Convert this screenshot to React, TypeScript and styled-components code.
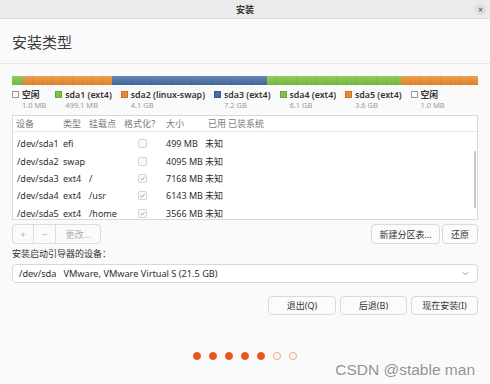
import styled, {createGlobalStyle} from "styled-components";

const GlobalStyle = createGlobalStyle`
  html, body {
    margin: 0;
    padding: 0;
    background: #fafafa;
  }
  body {
    font-family: "Noto Sans", "Noto Sans CJK SC", sans-serif;
    color: #333;
  }
`;

const colors = {
    green: "#7cc242",
    orange: "#ea8a2c",
    blue: "#456da3",
    accent: "#e95420",
    border: "#d6d6d6",
    text: "#333333",
    muted: "#888888",
};

type Segment = {color: string; width: number};

const segments: Segment[] = [
    {color: colors.green, width: 11},
    {color: colors.orange, width: 89},
    {color: colors.blue, width: 155},
    {color: colors.green, width: 134},
    {color: colors.orange, width: 77},
];

type LegendEntry = {name: string; size: string; color?: string};

const legend: LegendEntry[] = [
    {name: "空闲", size: "1.0 MB"},
    {name: "sda1 (ext4)", size: "499.1 MB", color: colors.green},
    {name: "sda2 (linux-swap)", size: "4.1 GB", color: colors.orange},
    {name: "sda3 (ext4)", size: "7.2 GB", color: colors.blue},
    {name: "sda4 (ext4)", size: "6.1 GB", color: colors.green},
    {name: "sda5 (ext4)", size: "3.6 GB", color: colors.orange},
    {name: "空闲", size: "1.0 MB"},
];

type Row = {dev: string; type: string; mount: string; format: boolean; size: string};

const rows: Row[] = [
    {dev: "", type: "", mount: "", format: true, size: ""},
    {dev: "/dev/sda1", type: "efi", mount: "", format: false, size: "499 MB"},
    {dev: "/dev/sda2", type: "swap", mount: "", format: false, size: "4095 MB"},
    {dev: "/dev/sda3", type: "ext4", mount: "/", format: true, size: "7168 MB"},
    {dev: "/dev/sda4", type: "ext4", mount: "/usr", format: true, size: "6143 MB"},
    {dev: "/dev/sda5", type: "ext4", mount: "/home", format: true, size: "3566 MB"},
];

export default function App() {
    return <Window>
        <GlobalStyle/>
        <TitleBar>
            <span/>
            <TitleText>安装</TitleText>
            <CloseButton>×</CloseButton>
        </TitleBar>
        <Header>安装类型</Header>
        <Content>
            <PartitionBar>
                {segments.map((s, i) => <BarSegment key={i} $color={s.color} style={{width: s.width}}/>)}
            </PartitionBar>
            <Legend>
                {legend.map((l, i) => <LegendItem key={i}>
                    <Swatch $color={l.color}/>
                    <div>
                        <LegendName>{l.name}</LegendName>
                        <LegendSize>{l.size}</LegendSize>
                    </div>
                </LegendItem>)}
            </Legend>
            <TableBox>
                <TableHead>
                    <HeadCell $pad={3}>设备</HeadCell>
                    <HeadCell>类型</HeadCell>
                    <HeadCell>挂载点</HeadCell>
                    <HeadCell>格式化？</HeadCell>
                    <HeadCell>大小</HeadCell>
                    <HeadCell $pad={3}>已用</HeadCell>
                    <HeadCell>已装系统</HeadCell>
                </TableHead>
                <TableBody>
                    <RowList>
                        {rows.map((r, i) => <TableRow key={i}>
                            <Cell $pad={4}>{r.dev}</Cell>
                            <Cell>{r.type}</Cell>
                            <Cell>{r.mount}</Cell>
                            <Cell><CheckBox>{r.format && <CheckMark/>}</CheckBox></Cell>
                            <Cell>{r.size}</Cell>
                            <Cell>{r.dev && "未知"}</Cell>
                            <Cell/>
                        </TableRow>)}
                    </RowList>
                    <ScrollThumb/>
                </TableBody>
            </TableBox>
            <ToolRow>
                <ButtonGroup>
                    <GroupButton $width={20}>+</GroupButton>
                    <GroupButton $width={21}>−</GroupButton>
                    <GroupButton $width={44}>更改...</GroupButton>
                </ButtonGroup>
                <Spacer/>
                <Button $width={69}>新建分区表...</Button>
                <Button $width={36}>还原</Button>
            </ToolRow>
            <FieldLabel>安装启动引导器的设备：</FieldLabel>
            <Select>
                <span>/dev/sda&nbsp;&nbsp;&nbsp;VMware, VMware Virtual S (21.5 GB)</span>
                <Chevron viewBox="0 0 8 5"><path d="M1 1 L4 4 L7 1" fill="none" stroke="#888" strokeWidth="1"/></Chevron>
            </Select>
            <ActionRow>
                <Button $width={68} $height={19}>退出(Q)</Button>
                <Button $width={67} $height={19}>后退(B)</Button>
                <Button $width={67} $height={19}>现在安装(I)</Button>
            </ActionRow>
        </Content>
        <Dots>
            {[0, 1, 2, 3, 4, 5, 6].map(i => <Dot key={i} $filled={i < 5}/>)}
        </Dots>
        <Watermark>CSDN @stable man</Watermark>
    </Window>
}

const Window = styled.div`
  position: relative;
  width: 490px;
  height: 384px;
  overflow: hidden;
  background: #fafafa;
  display: flex;
  flex-direction: column;
`;

const TitleBar = styled.div`
  height: 19px;
  background: #ebebeb;
  border-bottom: 1px solid #dcdcdc;
  box-sizing: border-box;
  display: grid;
  grid-template-columns: 1fr auto 1fr;
  align-items: center;
  padding: 0 4px;
`;

const TitleText = styled.span`
  font-size: 9px;
  font-weight: 700;
  color: #333;
`;

const CloseButton = styled.span`
  justify-self: end;
  width: 11px;
  height: 11px;
  border-radius: 50%;
  background: #dedede;
  color: #444;
  font-size: 8px;
  line-height: 11px;
  text-align: center;
`;

const Header = styled.div`
  height: 45px;
  box-sizing: border-box;
  padding: 0 12px;
  display: flex;
  align-items: center;
  font-size: 15px;
  color: #3a3a3a;
  border-bottom: 1px solid #e8e8e8;
`;

const Content = styled.div`
  padding: 12px 12px 0;
  display: flex;
  flex-direction: column;
`;

const PartitionBar = styled.div`
  display: flex;
  height: 9px;
`;

const BarSegment = styled.div<{ $color: string }>`
  height: 100%;
  background-color: ${({$color}) => $color};
  background-image: linear-gradient(rgba(255, 255, 255, 0.18), rgba(0, 0, 0, 0.06)),
    repeating-linear-gradient(90deg, transparent 0 9px, rgba(0, 0, 0, 0.08) 9px 10px);
`;

const Legend = styled.div`
  display: flex;
  gap: 9px;
  margin-top: 5px;
`;

const LegendItem = styled.div`
  display: flex;
  gap: 3px;
  align-items: flex-start;
`;

const Swatch = styled.div<{ $color?: string }>`
  width: 7px;
  height: 7px;
  margin-top: 1px;
  box-sizing: border-box;
  background: ${({$color}) => $color ?? "#fff"};
  border: 1px solid ${({$color}) => $color ? "rgba(0,0,0,0.15)" : "#999"};
`;

const LegendName = styled.div`
  font-size: 8.8px;
  font-weight: 600;
  line-height: 10px;
  color: #333;
`;

const LegendSize = styled.div`
  font-size: 7.5px;
  line-height: 10px;
  color: #999;
`;

const TableBox = styled.div`
  margin-top: 5px;
  height: 105px;
  box-sizing: border-box;
  border: 1px solid #d8d8d8;
  background: #fff;
  display: flex;
  flex-direction: column;
`;

const columns = "50px 26px 35px 42px 39px 23px 1fr";

const TableHead = styled.div`
  display: grid;
  grid-template-columns: ${columns};
  height: 15px;
  align-items: center;
  border-bottom: 1px solid #e6e6e6;
  flex-shrink: 0;
`;

const HeadCell = styled.div<{ $pad?: number }>`
  font-size: 9px;
  color: #7a7a7a;
  padding-left: ${({$pad}) => $pad ?? 0}px;
  white-space: nowrap;
`;

const TableBody = styled.div`
  position: relative;
  flex: 1;
  overflow: hidden;
`;

const RowList = styled.div`
  margin-top: -14px;
`;

const TableRow = styled.div`
  display: grid;
  grid-template-columns: ${columns};
  height: 17.3px;
  align-items: center;
`;

const Cell = styled.div<{ $pad?: number }>`
  font-size: 9px;
  color: #2e2e2e;
  padding-left: ${({$pad}) => $pad ?? 0}px;
  white-space: nowrap;
`;

const CheckBox = styled.div`
  margin-left: 14px;
  width: 9px;
  height: 9px;
  box-sizing: border-box;
  border: 1px solid #d4d4d4;
  border-radius: 2px;
  background: #fafafa;
  display: flex;
  align-items: center;
  justify-content: center;
`;

function CheckMark() {
    return <svg width="7" height="7" viewBox="0 0 7 7">
        <path d="M1.3 3.6 L2.9 5.1 L5.8 1.8" fill="none" stroke="#9a9a9a" strokeWidth="0.9"/>
    </svg>
}

const ScrollThumb = styled.div`
  position: absolute;
  right: 1px;
  top: 19px;
  width: 2px;
  height: 57px;
  border-radius: 1px;
  background: #c8c8c8;
`;

const ToolRow = styled.div`
  display: flex;
  gap: 2px;
  margin-top: 4px;
  height: 20px;
`;

const Spacer = styled.div`
  flex: 1;
`;

const ButtonGroup = styled.div`
  display: flex;
  border: 1px solid #dcdcdc;
  border-radius: 4px;
  overflow: hidden;
  background: #fafafa;
`;

const GroupButton = styled.div<{ $width: number }>`
  width: ${({$width}) => $width}px;
  display: flex;
  align-items: center;
  justify-content: center;
  font-size: 9px;
  color: #aaa;
  & + & {
    border-left: 1px solid #dcdcdc;
  }
`;

const Button = styled.div<{ $width: number; $height?: number }>`
  width: ${({$width}) => $width}px;
  height: ${({$height}) => $height ?? 20}px;
  box-sizing: border-box;
  border: 1px solid #d9d9d9;
  border-radius: 4px;
  background: #fbfbfb;
  display: flex;
  align-items: center;
  justify-content: center;
  font-size: 9px;
  color: #333;
  white-space: nowrap;
`;

const FieldLabel = styled.div`
  margin-top: 4px;
  font-size: 9px;
  line-height: 12px;
  color: #333;
`;

const Select = styled.div`
  margin-top: 4px;
  height: 19px;
  box-sizing: border-box;
  border: 1px solid #d9d9d9;
  border-radius: 4px;
  background: #fff;
  display: flex;
  align-items: center;
  justify-content: space-between;
  padding: 0 8px 0 6px;
  font-size: 9.2px;
  color: #2e2e2e;
`;

const Chevron = styled.svg`
  width: 7px;
  height: 5px;
`;

const ActionRow = styled.div`
  display: flex;
  justify-content: flex-end;
  gap: 4px;
  margin-top: 13px;
`;

const Dots = styled.div`
  display: flex;
  justify-content: center;
  gap: 8px;
  margin-top: 37px;
`;

const Dot = styled.div<{ $filled: boolean }>`
  width: 8px;
  height: 8px;
  box-sizing: border-box;
  border-radius: 50%;
  background: ${({$filled}) => $filled ? colors.accent : "transparent"};
  border: 1px solid ${({$filled}) => $filled ? colors.accent : "#f0a68a"};
`;

const Watermark = styled.div`
  position: absolute;
  right: 15px;
  bottom: 5px;
  font-family: "Liberation Sans", Arial, sans-serif;
  font-size: 15.5px;
  color: rgba(110, 110, 110, 0.75);
`;
